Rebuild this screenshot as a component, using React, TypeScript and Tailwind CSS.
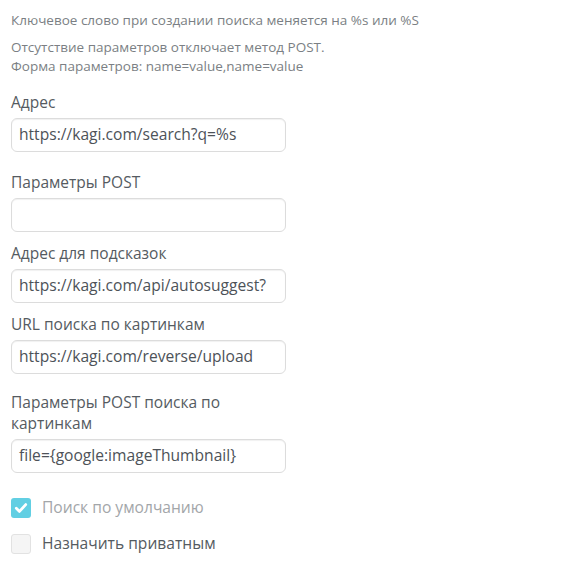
import React from "react";

const font = { fontFamily: '"Open Sans", "Noto Sans", sans-serif' };

const Field: React.FC<{ label: React.ReactNode; value: string; className?: string }> = ({ label, value, className }) => (
    <div className={`flex flex-col ${className ?? ""}`}>
        <label className="text-[15.5px] leading-[21px] text-[#555b61] mb-[5px]">{label}</label>
        <div className="w-[275px] h-[34px] rounded-[6px] border border-[#dcdcdc] bg-white shadow-[inset_0_1px_1px_rgba(0,0,0,0.06)] px-[7px] flex items-center text-[15.6px] text-[#4d5258] overflow-hidden whitespace-nowrap">
            {value}
        </div>
    </div>
);

export default function App() {
    return (
        <div className="w-[566px] h-[570px] bg-white pl-[11px] pt-[11px]" style={font}>
            <p className="text-[13.5px] leading-[19px] text-[#7b7f84]">Ключевое слово при создании поиска меняется на %s или %S</p>
            <p className="text-[13.5px] leading-[19px] text-[#7b7f84] mt-[8px]">
                Отсутствие параметров отключает метод POST.
                <br />
                Форма параметров: name=value,name=value
            </p>

            <div className="flex flex-col mt-[16px]">
                <Field label="Адрес" value="https://kagi.com/search?q=%s" />
                <Field label="Параметры POST" value="" className="mt-[20px]" />
                <Field label="Адрес для подсказок" value="https://kagi.com/api/autosuggest?" className="mt-[11px]" />
                <Field label="URL поиска по картинкам" value="https://kagi.com/reverse/upload" className="mt-[11px]" />
                <Field label={<>Параметры POST поиска по<br />картинкам</>} value="file={google:imageThumbnail}" className="mt-[18px]" />
            </div>

            <div className="flex flex-col gap-[13px] mt-[23px]">
                <div className="flex items-center gap-[11px]">
                    <span className="w-[20px] h-[20px] rounded-[3px] bg-[#62cfe3] flex items-center justify-center">
                        <svg width="14" height="14" viewBox="0 0 14 14" fill="none">
                            <path d="M2.3 7.3l3.2 3.1 6.2-6.8" stroke="white" strokeWidth="2.8" strokeLinecap="round" strokeLinejoin="round" />
                        </svg>
                    </span>
                    <span className="text-[15.6px] text-[#a3a6a9]">Поиск по умолчанию</span>
                </div>
                <div className="flex items-center gap-[11px]">
                    <span className="w-[20px] h-[20px] rounded-[3px] bg-[#f5f5f5] border border-[#e2e2e2]" />
                    <span className="text-[15.6px] text-[#555b61]">Назначить приватным</span>
                </div>
            </div>
        </div>
    );
}
